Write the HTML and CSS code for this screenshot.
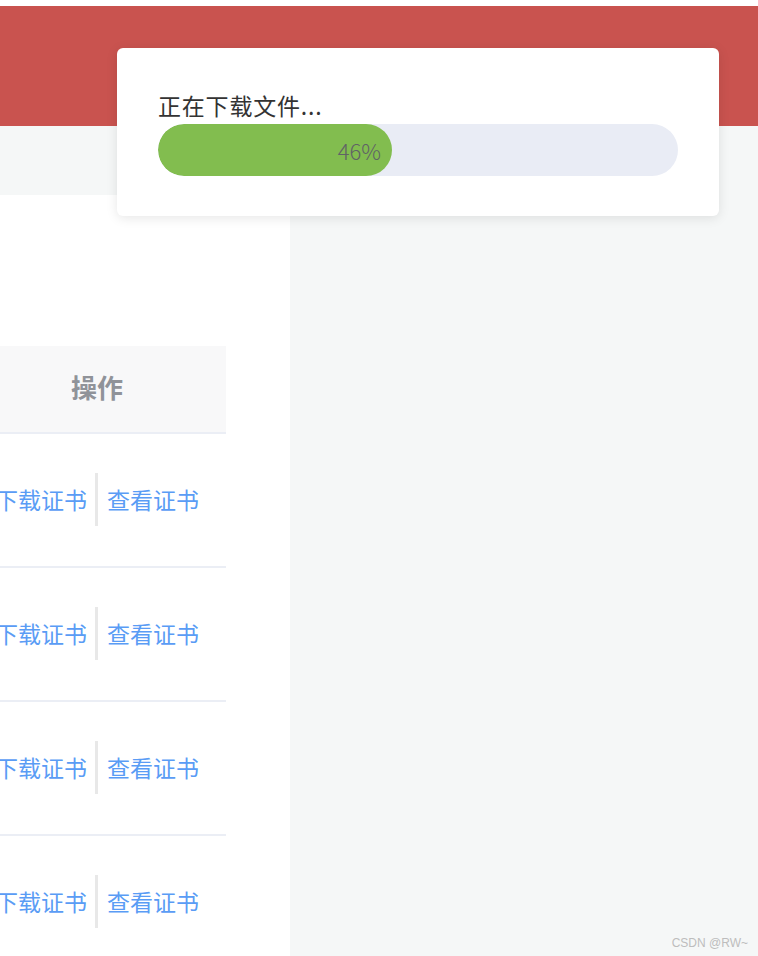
FILE: index.html
```html
<!DOCTYPE html>
<html lang="zh-CN">
<head>
<meta charset="UTF-8">
<title>证书列表</title>
<link rel="stylesheet" href="styles.css">
</head>
<body>
<div class="top-strip"></div>
<header class="app-header"></header>
<div class="sub-bar"></div>

<main class="main">
    <section class="panel">
        <div class="table">
            <div class="table-head"><span>操作</span></div>
            <div class="table-row">
                <a class="link">下载证书</a><span class="sep"></span><a class="link">查看证书</a>
            </div>
            <div class="table-row">
                <a class="link">下载证书</a><span class="sep"></span><a class="link">查看证书</a>
            </div>
            <div class="table-row">
                <a class="link">下载证书</a><span class="sep"></span><a class="link">查看证书</a>
            </div>
            <div class="table-row">
                <a class="link">下载证书</a><span class="sep"></span><a class="link">查看证书</a>
            </div>
        </div>
    </section>
</main>

<div class="download-box">
    <p class="download-title">正在下载文件...</p>
    <div class="progress">
        <div class="progress-bar" style="width: 45%">
            <span class="progress-text">46%</span>
        </div>
    </div>
</div>

<span class="watermark">CSDN @RW~</span>
</body>
</html>
```

FILE: styles.css
```css
html,
body {
    height: 100%;
}

body {
    margin: 0;
    background: #f5f7f7;
    font-family: "Noto Sans CJK SC", "Noto Sans", sans-serif;
    overflow: hidden;
    position: relative;
}

.top-strip {
    height: 6px;
    background: #fff;
}

.app-header {
    height: 120px;
    background: #c9534f;
}

.sub-bar {
    height: 69px;
    background: #f5f7f7;
}

.main {
    display: flex;
    height: 761px;
}

.panel {
    width: 290px;
    background: #fff;
    padding-top: 151px;
}

.table {
    width: 258px;
    margin-left: -32px;
}

.table-head {
    height: 86px;
    display: flex;
    align-items: center;
    justify-content: center;
    background: #f8f8f9;
    border-bottom: 2px solid #ebeef5;
    color: #909399;
    font-size: 26px;
    font-weight: 700;
}

.table-head span {
    margin-bottom: 6px;
}

.table-row {
    height: 132px;
    display: flex;
    align-items: center;
    justify-content: center;
    border-bottom: 2px solid #ebeef5;
}

.link {
    color: #5a9cf5;
    font-size: 23px;
    line-height: 30px;
    margin-bottom: 2px;
}

.sep {
    width: 3px;
    height: 53px;
    background: #e8e8e8;
    margin: 0 9px 2px 8px;
}

.download-box {
    position: absolute;
    left: 117px;
    top: 48px;
    width: 520px;
    padding: 42px 41px 40px;
    background: #fff;
    border-radius: 6px;
    box-shadow: 0 2px 12px rgba(0, 0, 0, 0.1);
}

.download-title {
    margin: 0 0 4px;
    font-size: 23px;
    line-height: 30px;
    letter-spacing: 0.8px;
    color: #333;
}

.progress {
    height: 52px;
    border-radius: 26px;
    background: #e9ecf5;
    overflow: hidden;
}

.progress-bar {
    height: 100%;
    border-radius: 26px;
    background: #82bd4f;
    display: flex;
    align-items: center;
    justify-content: flex-end;
}

.progress-text {
    margin-right: 11px;
    font-size: 22px;
    font-weight: 300;
    color: #606266;
}

.watermark {
    position: absolute;
    right: 10px;
    bottom: 6px;
    font-family: "Liberation Sans", sans-serif;
    font-size: 12px;
    color: #bdbdbd;
}
```
